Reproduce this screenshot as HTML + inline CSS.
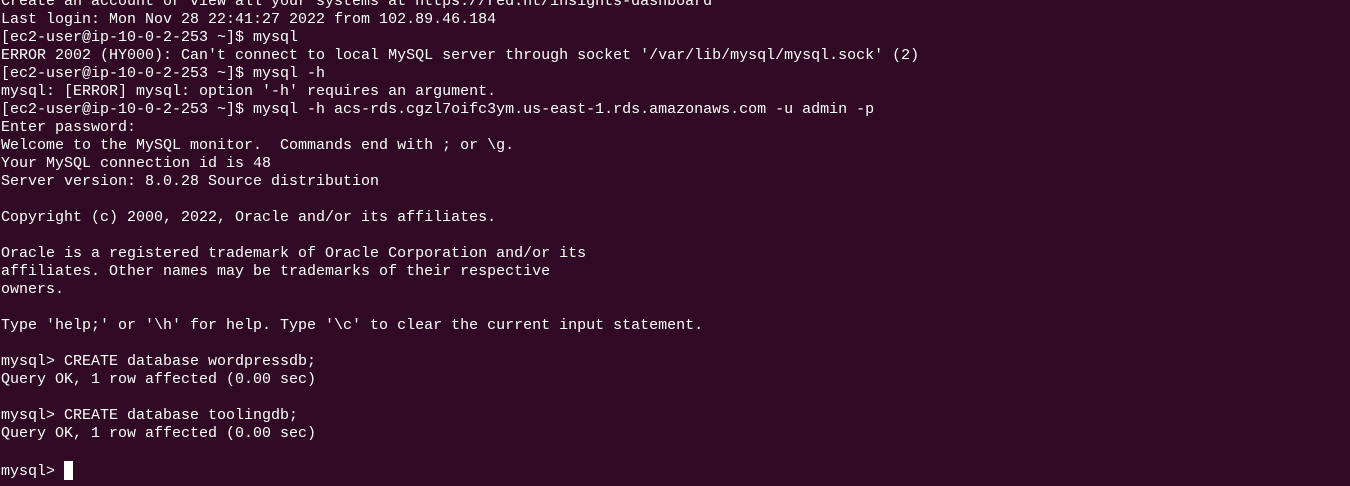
<!DOCTYPE html>
<html><head><meta charset="utf-8"><style>
html,body{margin:0;padding:0;background:#300a24;width:1350px;height:486px;overflow:hidden}
pre{margin:0;position:absolute;left:1px;top:-7px;font-family:"Liberation Mono","DejaVu Sans Mono",monospace;font-size:15px;line-height:18px;color:#ffffff}
.c{display:inline-block;width:9px;height:19px;background:#fff;vertical-align:-5px}
</style></head><body><pre>Create an account or view all your systems at https://red.ht/insights-dashboard
Last login: Mon Nov 28 22:41:27 2022 from 102.89.46.184
[ec2-user@ip-10-0-2-253 ~]$ mysql
ERROR 2002 (HY000): Can't connect to local MySQL server through socket '/var/lib/mysql/mysql.sock' (2)
[ec2-user@ip-10-0-2-253 ~]$ mysql -h
mysql: [ERROR] mysql: option '-h' requires an argument.
[ec2-user@ip-10-0-2-253 ~]$ mysql -h acs-rds.cgzl7oifc3ym.us-east-1.rds.amazonaws.com -u admin -p
Enter password:
Welcome to the MySQL monitor.  Commands end with ; or \g.
Your MySQL connection id is 48
Server version: 8.0.28 Source distribution

Copyright (c) 2000, 2022, Oracle and/or its affiliates.

Oracle is a registered trademark of Oracle Corporation and/or its
affiliates. Other names may be trademarks of their respective
owners.

Type 'help;' or '\h' for help. Type '\c' to clear the current input statement.

mysql&gt; CREATE database wordpressdb;
Query OK, 1 row affected (0.00 sec)

mysql&gt; CREATE database toolingdb;
Query OK, 1 row affected (0.00 sec)

mysql&gt; <span class="c"></span></pre></body></html>
